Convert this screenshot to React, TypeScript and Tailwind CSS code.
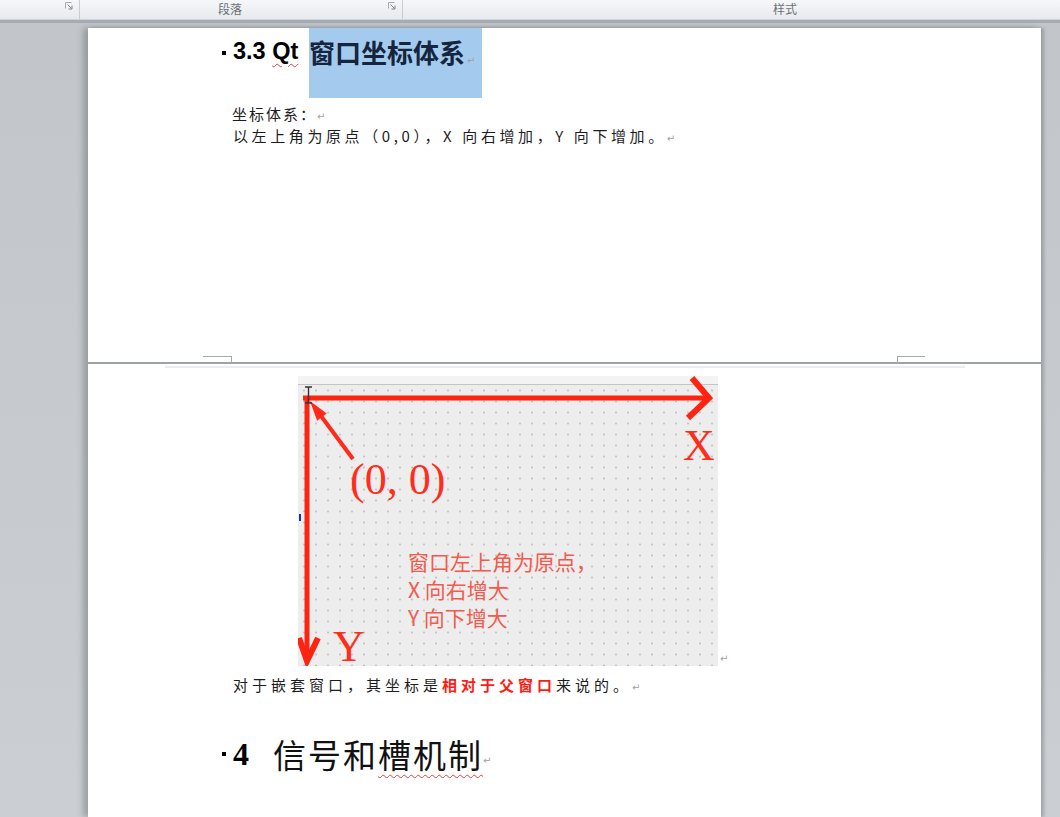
const Launcher = () => (
  <svg width="8" height="8" viewBox="0 0 8 8" className="shrink-0">
    <path d="M0.5 6.5V0.5H6.5" stroke="#a5aab0" fill="none" />
    <path d="M2.5 2.5L6.5 6.5M7 3.5V7H3.5" stroke="#7d8289" fill="none" />
  </svg>
);

const Ret = ({ className = "" }: { className?: string }) => (
  <span className={`text-[10px] leading-none text-[#a0a0a0] font-['DejaVu_Sans',sans-serif] ${className}`}>↵</span>
);

function Ribbon() {
  return (
    <div className="h-[20px] flex bg-linear-to-b from-[#f5f7f9] to-[#e7eaee] border-b border-[#d0d4d9] text-[12px] leading-[17px] text-[#6d7177]">
      <div className="w-[80px] border-r border-[#c9cdd2] flex justify-end pr-[6px] pt-[2px]">
        <Launcher />
      </div>
      <div className="w-[323px] border-r border-[#c9cdd2] flex">
        <span className="ml-[138px]">段落</span>
        <span className="ml-[146px] pt-[2px]">
          <Launcher />
        </span>
      </div>
      <div className="flex-1 flex">
        <span className="ml-[370px]">样式</span>
      </div>
    </div>
  );
}

function PageOne() {
  return (
    <div className="h-[334px] flex flex-col">
      <div className="flex pl-[134px]">
        <div className="w-[87px] flex items-start">
          <span className="w-[4px] h-[4px] bg-black mt-[23px] shrink-0" />
          <span className="ml-[7px] mt-[12px] text-[23.5px] leading-none font-bold font-['Liberation_Sans',sans-serif] text-black whitespace-nowrap">
            3.3{" "}
            <span className="underline decoration-wavy decoration-[#e0403a] decoration-1 underline-offset-[4px]">Qt</span>
          </span>
        </div>
        <div className="w-[173px] h-[70px] bg-[#a4cbee] flex items-start pt-[11px]">
          <span className="text-[26px] leading-none font-bold text-[#15253d] whitespace-nowrap">窗口坐标体系</span>
          <Ret className="mt-[17px] ml-[2px]" />
        </div>
      </div>
      <div className="mt-[5px] pl-[144px] text-[15px] leading-[22px] tracking-[2px] text-[#1d1d1d]">
        坐标体系：<Ret />
      </div>
      <div className="pl-[145px] text-[15px] leading-[22px] tracking-[3.6px] text-[#1d1d1d] whitespace-nowrap">
        以左上角为原点（0,0），X 向右增加，Y 向下增加。<Ret />
      </div>
      <div className="mt-auto flex pl-[115px]">
        <div className="w-[29px] h-[6px] border-t border-r border-[#a9a9a9]" />
        <div className="ml-[665px] w-[28px] h-[6px] border-t border-l border-[#a9a9a9]" />
      </div>
    </div>
  );
}

function Diagram() {
  return (
    <div className="relative w-[420px] h-[290px] bg-[#ededed]">
      <div className="h-[8px] bg-[#f3f3f3]" />
      <div className="h-[1px] bg-[#c4c4c4]" />
      <div className="absolute inset-x-0 top-[9px] bottom-0 bg-[radial-gradient(circle,#c3c3c3_0.8px,transparent_1.3px)] bg-[length:12px_11px]" />
      <svg className="absolute inset-0" width="420" height="290" viewBox="0 0 420 290">
        <line x1="5" y1="22" x2="410" y2="22" stroke="#ff2312" strokeWidth="5" />
        <polyline points="394,2 411,22 390,42" fill="none" stroke="#ff2312" strokeWidth="6" />
        <line x1="9" y1="20" x2="9" y2="282" stroke="#ff2312" strokeWidth="5" />
        <polyline points="1,262 9,285 20,262" fill="none" stroke="#ff2312" strokeWidth="6" />
        <line x1="55" y1="83" x2="20" y2="36" stroke="#ff2a1a" strokeWidth="4" />
        <polygon points="12,25 28.7,37.5 19.1,44.7" fill="#ff2a1a" />
        <path d="M7 11h7M10.5 11v16M7 27h7" stroke="#333" strokeWidth="1.4" fill="none" />
      </svg>
      <div className="absolute left-[1px] top-[138px] w-[2px] h-[7px] bg-[#1c2fa3]" />
      <span className="absolute left-[385px] top-[48px] text-[44px] leading-none text-[#ff2d1c] font-['Liberation_Serif',serif]">X</span>
      <span className="absolute left-[52px] top-[82px] text-[44px] leading-none text-[#ff2d1c] font-['Liberation_Serif',serif] whitespace-nowrap">(0, 0)</span>
      <span className="absolute left-[35px] top-[249px] text-[44px] leading-none text-[#ff2d1c] font-['Liberation_Serif',serif]">Y</span>
      <div className="absolute left-[110px] top-[171px] text-[21px] leading-[28px] text-[#f25a4e] whitespace-nowrap">
        <div>窗口左上角为原点，</div>
        <div>X 向右增大</div>
        <div>Y 向下增大</div>
      </div>
    </div>
  );
}

function PageTwo() {
  return (
    <div className="flex-1 flex flex-col">
      <div className="mt-[2px] ml-[77px] w-[800px] h-[2px] bg-[#ececec]" />
      <div className="mt-[8px] flex items-end pl-[210px]">
        <Diagram />
        <Ret className="ml-[2px] mb-[2px]" />
      </div>
      <div className="mt-[8px] pl-[145px] text-[15px] leading-[22px] tracking-[4px] text-[#1d1d1d] whitespace-nowrap">
        对于嵌套窗口，其坐标是<span className="font-bold text-[#ff1a12]">相对于父窗口</span>来说的。<Ret />
      </div>
      <div className="mt-[36px] h-[44px] flex items-center pl-[134px]">
        <span className="w-[4px] h-[4px] bg-black shrink-0" />
        <span className="ml-[7px] text-[32px] leading-none font-bold font-['Liberation_Serif',serif] text-black">4</span>
        <span className="ml-[24px] text-[33px] leading-none tracking-[2px] text-[#111] whitespace-nowrap">
          信号和<span className="underline decoration-wavy decoration-[#e0403a] decoration-1 underline-offset-[6px]">槽机制</span>
        </span>
        <Ret className="mt-[14px]" />
      </div>
    </div>
  );
}

export default function App() {
  return (
    <div className="w-[1060px] h-[817px] overflow-hidden flex flex-col bg-[#c9cdd2] font-['Noto_Sans_CJK_SC',sans-serif]">
      <Ribbon />
      <div className="h-[3px] bg-[#a7acb2]" />
      <div className="flex-1 flex pt-[5px] pl-[88px] bg-linear-to-b from-[#c2c6cb] to-[#cbcfd4]">
        <div className="w-[953px] flex flex-col bg-white shadow-[-5px_0_6px_rgba(70,75,82,0.35),3px_0_3px_rgba(70,75,82,0.3)]">
          <PageOne />
          <div className="h-[2px] bg-[#9ea3a9] -mx-[1px]" />
          <PageTwo />
        </div>
      </div>
    </div>
  );
}
